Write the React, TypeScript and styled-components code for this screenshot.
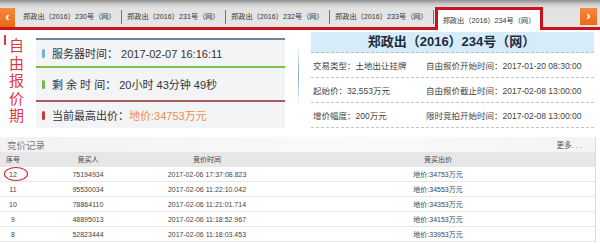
import styled, { createGlobalStyle } from "styled-components";

const GlobalStyle = createGlobalStyle`
  html, body {
    margin: 0;
    padding: 0;
    background: #ffffff;
  }
  body {
    width: 600px;
    height: 244px;
    overflow: hidden;
    font-family: "Liberation Sans", "Noto Sans CJK SC", sans-serif;
    color: #333;
  }
`;

const Page = styled.div`
  width: 600px;
  height: 244px;
  overflow: hidden;
`;

const TabBar = styled.div`
  height: 27px;
  display: flex;
  align-items: flex-end;
  background: linear-gradient(#8f8f8f 0, #c9c9c9 4px, #e2e2e2 8px, #e6e6e6 100%);
  border-bottom: 3px solid #c9141c;
`;

const Arrow = styled.div<{ $right?: boolean }>`
  width: ${(p) => (p.$right ? "17px" : "15px")};
  height: ${(p) => (p.$right ? "17px" : "19px")};
  margin: ${(p) => (p.$right ? "0 3px 2px auto" : "0 3px 0 0")};
  background: linear-gradient(#f68a3a, #ea6a16);
  color: #fff;
  font-size: 13px;
  font-weight: bold;
  line-height: ${(p) => (p.$right ? "16px" : "18px")};
  text-align: center;
`;

const Tab = styled.div`
  position: relative;
  width: 104px;
  height: 20px;
  padding-left: 5px;
  box-sizing: border-box;
  font-size: 7.2px;
  line-height: 20px;
  color: #333;
  white-space: nowrap;

  &::after {
    content: "";
    position: absolute;
    right: 0;
    top: 3px;
    width: 1px;
    height: 14px;
    background: #3d7fc4;
  }
`;

const ActiveTab = styled.div`
  width: 108px;
  height: 23px;
  margin-left: 1px;
  margin-bottom: -3px;
  box-sizing: border-box;
  border: 3px solid #c9141c;
  border-bottom: none;
  background: #fff;
  font-size: 7.2px;
  line-height: 21px;
  text-align: center;
  white-space: nowrap;
  color: #333;
`;

const Content = styled.div`
  height: 100px;
  display: flex;
  align-items: flex-start;
`;

const Label = styled.div`
  width: 36px;
  display: flex;
  padding-left: 4px;
  box-sizing: border-box;
`;

const LabelBar = styled.div`
  width: 2px;
  height: 10px;
  margin-top: 5px;
  margin-right: 3px;
  background: #e0383e;
`;

const LabelText = styled.div`
  width: 15px;
  margin-top: 7px;
  font-size: 15px;
  line-height: 17.5px;
  color: #e0383e;
`;

const Status = styled.div`
  width: 249px;
  margin-top: 8px;
  background: #f3f4f5;
`;

const StatusRow = styled.div<{ $line: string; $h: number }>`
  height: ${(p) => p.$h}px;
  box-sizing: border-box;
  border-top: 2px solid ${(p) => p.$line};
  display: flex;
  align-items: center;
  padding-left: 6px;
  font-size: 11px;
  color: #333;
  white-space: nowrap;
`;

const Dot = styled.span<{ $c: string }>`
  display: inline-block;
  width: 3px;
  height: 9px;
  border-radius: 2px;
  margin-right: 7px;
  background: ${(p) => p.$c};
`;

const Price = styled.span`
  color: #ef8d4e;
`;

const Divider = styled.div`
  width: 1px;
  height: 60px;
  margin: 15px 12px 0 13px;
  background: linear-gradient(rgba(110, 150, 190, 0), #7fa6c8 50%, rgba(110, 150, 190, 0));
`;

const Info = styled.div`
  width: 283px;
  margin-top: 2px;
`;

const InfoTitle = styled.div`
  height: 20px;
  background: #d6ecfa;
  border-bottom: 1px dashed #b9c2c8;
  font-size: 13px;
  font-weight: bold;
  line-height: 20px;
  text-align: center;
  color: #1e2b38;
  padding-right: 2px;
`;

const InfoRow = styled.div`
  height: 24px;
  display: flex;
  align-items: center;
  border-bottom: 1px dashed #c3c3c3;
  font-size: 8.5px;
  color: #444;
  white-space: nowrap;
  padding-left: 2px;
`;

const InfoCell = styled.div<{ $w?: number }>`
  width: ${(p) => (p.$w ? `${p.$w}px` : "auto")};
`;

const Records = styled.div`
  margin-top: 7px;
  width: 596px;
  border-right: 1px solid #dcdcdc;
  box-sizing: border-box;
`;

const RecordHead = styled.div`
  height: 15px;
  display: flex;
  align-items: center;
  justify-content: space-between;
  padding: 0 13px 0 7px;
  background: linear-gradient(90deg, #f2f2f2, #fafafa 60%, #f4f4f4);
`;

const RecordTitle = styled.div`
  font-size: 9.5px;
  color: #777;
`;

const More = styled.div`
  font-size: 7.5px;
  color: #555;
`;

const Row = styled.div<{ $head?: boolean }>`
  display: grid;
  grid-template-columns: 26px 124px 114px 1fr;
  height: 15px;
  box-sizing: border-box;
  align-items: center;
  font-size: 7px;
  color: #444;
  background: ${(p) => (p.$head ? "#e7e7e7" : "#fff")};
  border-bottom: 1px solid ${(p) => (p.$head ? "#e7e7e7" : "#e8e8e8")};
`;

const Cell = styled.div<{ $pad?: number }>`
  position: relative;
  text-align: center;
  padding-left: ${(p) => p.$pad ?? 0}px;
  white-space: nowrap;
`;

const Circle = styled.div`
  position: absolute;
  left: 4px;
  top: -4px;
  width: 22px;
  height: 12px;
  border: 1px solid #c8262c;
  border-radius: 50%;
`;

const tabs = ["230", "231", "232", "233"];

const records = [
  { no: "12", buyer: "75194934", time: "2017-02-06 17:37:08.823", price: "34753" },
  { no: "11", buyer: "95530034", time: "2017-02-06 11:22:10.042", price: "34553" },
  { no: "10", buyer: "78864110", time: "2017-02-06 11:21:01.714", price: "34353" },
  { no: "9", buyer: "48895013", time: "2017-02-06 11:18:52.967", price: "34153" },
  { no: "8", buyer: "52823444", time: "2017-02-06 11:18:03.453", price: "33953" },
];

function App() {
  return (
    <Page>
      <GlobalStyle />
      <TabBar>
        <Arrow>‹</Arrow>
        {tabs.map((t) => (
          <Tab key={t}>郑政出（2016）{t}号（网）</Tab>
        ))}
        <ActiveTab>郑政出（2016）234号（网）</ActiveTab>
        <Arrow $right>›</Arrow>
      </TabBar>

      <Content>
        <Label>
          <LabelBar />
          <LabelText>自由报价期</LabelText>
        </Label>
        <Status>
          <StatusRow $line="#6f8595" $h={28}>
            <Dot $c="#79acd6" />
            服务器时间： 2017-02-07 16:16:11
          </StatusRow>
          <StatusRow $line="#7cc04a" $h={34}>
            <Dot $c="#74b843" />
            剩 余 时 间： 20小时 43分钟 49秒
          </StatusRow>
          <StatusRow $line="#a9595b" $h={28}>
            <Dot $c="#c43a34" />
            当前最高出价： <Price>地价:34753万元</Price>
          </StatusRow>
        </Status>
        <Divider />
        <Info>
          <InfoTitle>郑政出（2016）234号（网）</InfoTitle>
          <InfoRow>
            <InfoCell $w={113}>交易类型：土地出让挂牌</InfoCell>
            <InfoCell>自由报价开始时间：2017-01-20 08:30:00</InfoCell>
          </InfoRow>
          <InfoRow>
            <InfoCell $w={113}>起始价：32,553万元</InfoCell>
            <InfoCell>自由报价截止时间：2017-02-08 13:00:00</InfoCell>
          </InfoRow>
          <InfoRow>
            <InfoCell $w={113}>增价幅度：200万元</InfoCell>
            <InfoCell>限时竞拍开始时间：2017-02-08 13:00:00</InfoCell>
          </InfoRow>
        </Info>
      </Content>

      <Records>
        <RecordHead>
          <RecordTitle>竞价记录</RecordTitle>
          <More>更多. . .</More>
        </RecordHead>
        <Row $head>
          <Cell>序号</Cell>
          <Cell>竞买人</Cell>
          <Cell>竞价时间</Cell>
          <Cell $pad={17}>竞买出价</Cell>
        </Row>
        {records.map((r, i) => (
          <Row key={r.no}>
            <Cell>
              {r.no}
              {i === 0 && <Circle />}
            </Cell>
            <Cell>{r.buyer}</Cell>
            <Cell>{r.time}</Cell>
            <Cell $pad={17}>地价:{r.price}万元</Cell>
          </Row>
        ))}
      </Records>
    </Page>
  );
}

export default App;
